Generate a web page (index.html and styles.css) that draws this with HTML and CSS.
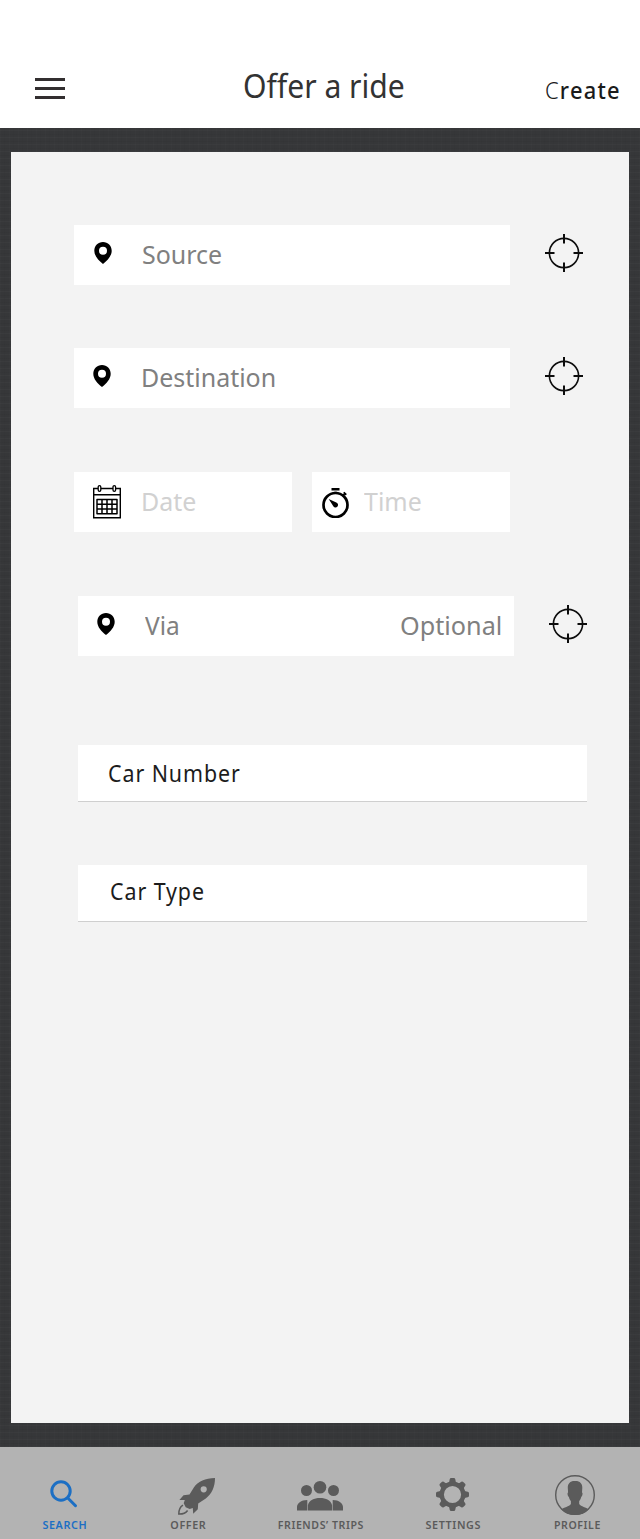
FILE: index.html
```html
<!DOCTYPE html>
<html lang="en">
<head>
<meta charset="utf-8">
<title>Offer a ride</title>
<link rel="stylesheet" href="styles.css">
</head>
<body>
<svg class="defs" aria-hidden="true">
  <symbol id="pin" viewBox="0 0 18 22"><path fill-rule="evenodd" d="M9 0C4 0 .3 3.800.3 8.700.3 14 4.600 18.600 9 22c4.400-3.400 8.700-8 8.700-13.300C17.700 3.800 14 0 9 0zm0 4.700a4 4 0 1 1 0 8 4 4 0 0 1 0-8z"/></symbol>
  <symbol id="target" viewBox="0 0 38 38"><g fill="none" stroke="#0c0c0c"><circle cx="19" cy="19" r="14.600" stroke-width="1.600"/><path stroke-width="2" d="M19 0v9.500M19 28.500V38M0 19h9.500M28.500 19H38"/></g></symbol>
</svg>

<header class="topbar">
  <button class="menu" aria-label="Menu"><i></i><i></i><i></i></button>
  <h1 class="title"><span class="fit">Offer a ride</span></h1>
  <a class="create"><span class="fit"><span class="thin">C</span>reate</span></a>
</header>

<main class="backdrop">
  <form class="panel">
    <div class="row">
      <div class="field wide"><svg class="pin"><use href="#pin"/></svg><span class="fit t-source">Source</span></div>
      <svg class="target"><use href="#target"/></svg>
    </div>
    <div class="row destination">
      <div class="field wide"><svg class="pin"><use href="#pin"/></svg><span class="fit t-destination">Destination</span></div>
      <svg class="target"><use href="#target"/></svg>
    </div>
    <div class="row">
      <div class="field date">
        <svg class="calendar" viewBox="0 0 28 34" fill="none" stroke="#000">
          <path stroke-width="1.400" d="M5 3.500H.7v29.200h26.600V3.500H23M8 3.500h12M.7 9.800h26.600"/>
          <rect x="5.200" y=".7" width="2.600" height="5.600" rx="1.300" stroke-width="1.300"/>
          <rect x="20" y=".7" width="2.600" height="5.600" rx="1.300" stroke-width="1.300"/>
          <path stroke-width="1.500" stroke-linejoin="round" d="M4 14.600h20v14.100H4zM4 19.300h20M4 24h20M9 14.600v14.100M14 14.600v14.100M19 14.600v14.100"/>
        </svg>
        <span class="fit t-date">Date</span>
      </div>
      <div class="field time">
        <svg class="stopwatch" viewBox="0 0 28 30">
          <circle cx="13.500" cy="17" r="12" fill="none" stroke="#000" stroke-width="2.700"/>
          <path d="M9.500 0h8v2.400h-8zM12.200 3.800h2.700V6h-2.700zM19.800 7l2-1.500-.6-.7 1.200-1 2.400 2.200-1 1.400-.9-.6-1.500 2z"/>
          <path d="M6.700 10.900l7.600 3.600a2.600 2.600 0 1 1-3.300 3.300z"/>
        </svg>
        <span class="fit t-time">Time</span>
      </div>
    </div>
    <div class="row via">
      <div class="field wide"><svg class="pin"><use href="#pin"/></svg><span class="fit t-via">Via</span><span class="fit optional">Optional</span></div>
      <svg class="target"><use href="#target"/></svg>
    </div>
    <div class="line number"><span class="fit">Car Number</span></div>
    <div class="line type"><span class="fit">Car Type</span></div>
  </form>
</main>

<nav class="tabs">
  <a class="tab active">
    <svg class="ic-search" viewBox="0 0 28 28" fill="none" stroke="#1c6fc4"><circle cx="11" cy="11" r="9.200" stroke-width="3"/><path d="M17.800 18l7.700 7.700" stroke-width="3" stroke-linecap="round"/></svg>
    <span class="fit">SEARCH</span>
  </a>
  <a class="tab offer">
    <svg class="ic-rocket" viewBox="0 0 37 37" fill="#5b5b5b"><path fill-rule="evenodd" d="M37 0C27 .2 20.500 3.200 16 9.200L11.500 16.600 5.500 17.300 1.400 22 6.800 22.100 5.700 25.200 7.700 29.300 11.700 31 14.800 30.100 15.200 35.700 19.800 31.300 20.200 25.500 27.800 20.500C34 15.500 37 9 37 0zM25.700 8.200a3.100 3.100 0 1 1 0 6.200 3.100 3.100 0 0 1 0-6.200z"/><path fill="none" stroke="#5b5b5b" stroke-width="1.500" d="M5 27.200C1.800 29 .8 31.500.8 36.100 4 36.200 7.800 35 9.600 32.500"/></svg>
    <span class="fit">OFFER</span>
  </a>
  <a class="tab friends">
    <svg class="ic-friends" viewBox="0 0 46 30" fill="#5b5b5b"><circle cx="9.500" cy="9.500" r="5.500"/><circle cx="36.500" cy="9.500" r="5.500"/><circle cx="23" cy="6.300" r="6.300"/><path d="M0 29.500V26c0-3.500 4-7 10.300-7v10.500zM46 29.500V26c0-3.500-4-7-10.300-7v10.500zM10.900 29.500v-5.300C12 19.500 17 17 23 17s11 2.500 12.100 7.200v5.300z"/></svg>
    <span class="fit">FRIENDS’ TRIPS</span>
  </a>
  <a class="tab settings">
    <svg class="ic-gear" viewBox="-16.500 -16.500 33 33" fill="#5b5b5b"><defs><path id="tooth" d="M-4.300-11.500Q-2.900-12.500-2.800-15.200Q-2.600-16.500-1.300-16.500H1.300Q2.600-16.500 2.800-15.200Q2.900-12.500 4.300-11.500z"/></defs>
      <circle r="10.800" fill="none" stroke="#5b5b5b" stroke-width="4.400"/>
      <use href="#tooth"/><use href="#tooth" transform="rotate(45)"/><use href="#tooth" transform="rotate(90)"/><use href="#tooth" transform="rotate(135)"/><use href="#tooth" transform="rotate(180)"/><use href="#tooth" transform="rotate(225)"/><use href="#tooth" transform="rotate(270)"/><use href="#tooth" transform="rotate(315)"/></svg>
    <span class="fit">SETTINGS</span>
  </a>
  <a class="tab profile">
    <svg class="ic-profile" viewBox="0 0 40 40"><circle cx="20" cy="20" r="19.300" fill="none" stroke="#5b5b5b" stroke-width="1.400"/><path fill="#5b5b5b" d="M20 6c4.800-.2 7.500 2.500 7.300 7l-.3 4.500c1 0 .6 3.800-.8 4.500-.4 1.900-1 3-2 4v3c2 2.600 6.800 3.300 9.600 5.400A20 20 0 0 1 20 40 20 20 0 0 1 6.200 34.400C9 32.300 14 31.600 15.900 29v-3c-1-1-1.600-2.100-2-4-1.400-.7-1.800-4.500-.8-4.500L12.800 13C12.600 8.500 15.200 5.800 20 6z"/></svg>
    <span class="fit">PROFILE</span>
  </a>
</nav>
</body>
</html>
```
FILE: styles.css
```css
* { box-sizing: border-box; }
body {
  margin: 0;
  width: 640px;
  font-family: "Noto Sans", "Open Sans", sans-serif;
  background: #fff;
}
svg { display: block; flex: none; }
.defs { display: none; }

/* Condensed text runs, scaled from their left edge */
.fit {
  display: inline-block;
  white-space: pre;
  transform: scaleX(var(--sx, .96));
  transform-origin: 0 50%;
}

.topbar {
  height: 128px;
  padding: 60px 0 0 35px;
  display: flex;
  align-items: flex-start;
  color: #333;
}
.menu {
  width: 30px;
  margin: 18px 0 0;
  padding: 0;
  border: 0;
  background: none;
  display: grid;
  gap: 6px;
}
.menu i { height: 3px; background: #332f30; }
.title {
  margin: 0 0 0 178px;
  width: 302px;
  font-size: 32px;
  font-weight: 400;
  line-height: 51px;
  --sx: .94;
}
.create {
  font-size: 23px;
  font-weight: 500;
  line-height: 61px;
  letter-spacing: 1.3px;
  color: #1b1b1b;
  --sx: .95;
}
.thin { font-weight: 300; }

.backdrop {
  height: 1319px;
  padding: 24px 11px;
  background-color: #363739;
  background-image:
    repeating-linear-gradient(0deg, rgba(255,255,255,.018) 0 1px, transparent 1px 3px, rgba(0,0,0,.03) 3px 4px, transparent 4px 7px),
    repeating-linear-gradient(90deg, rgba(255,255,255,.01) 0 1px, transparent 1px 4px, rgba(0,0,0,.02) 4px 5px, transparent 5px 9px);
}
.panel {
  height: 1271px;
  padding: 73px 0 0 63px;
  background: #f3f3f3;
}
.row { display: flex; height: 60px; margin-bottom: 64px; }
.row:first-child { margin-bottom: 63px; }
.row.via { margin: 0 0 89px 4px; }
.field {
  height: 60px;
  display: flex;
  align-items: flex-start;
  background: #fff;
  font-size: 26px;
  line-height: 58px;
  color: #808080;
}
.wide { width: 436px; }
.pin { width: 18px; height: 22px; margin: 17px 30px 0 19.5px; }
.destination .pin { margin-left: 18.5px; }
.via .pin { margin: 17px 30px 0 18.5px; }
.target { width: 38px; height: 38px; margin: 9px 0 0 35px; }
.date { width: 218px; margin-right: 20px; color: #d1d1d1; }
.time { width: 198px; color: #d1d1d1; }
.calendar { width: 28px; height: 34px; margin: 13px 20px 0 19px; }
.stopwatch { width: 28px; height: 30px; margin: 16px 14px 0 10px; }
.t-via { width: 255px; --sx: .94; }
.optional { --sx: .97; }

.line {
  width: 509px;
  height: 57px;
  margin: 0 0 63px 4px;
  padding-left: 30px;
  border-bottom: 1px solid #cfcfcf;
  background: #fff;
  color: #1c1c1c;
  font-size: 23px;
  line-height: 56px;
  letter-spacing: 1px;
  --sx: .93;
}
.type { padding-left: 32px; line-height: 52px; }

.tabs {
  height: 92px;
  display: grid;
  grid-template-columns: 128px 120px 144px 121px 127px;
  background: #b3b3b3;
}
.tab {
  display: grid;
  grid-template-rows: 70px 18px;
  justify-items: center;
  align-items: start;
  font-size: 11px;
  font-weight: 600;
  line-height: 16px;
  letter-spacing: .6px;
  color: #5b5b5b;
  --sx: .98;
}
.tab .fit { transform-origin: 50% 50%; margin-left: 1px; }
.friends, .profile { --sx: .96; }
.active { color: #1c6fc4; }
.ic-search { width: 28px; height: 28px; margin-top: 33px; }
.ic-rocket { width: 37px; height: 37px; margin: 31px 0 0 17px; }
.ic-friends { width: 46px; height: 30px; margin-top: 34px; }
.ic-gear { width: 33px; height: 33px; margin-top: 31px; }
.ic-profile { width: 40px; height: 40px; margin: 28px 3px 0 0; }
```
